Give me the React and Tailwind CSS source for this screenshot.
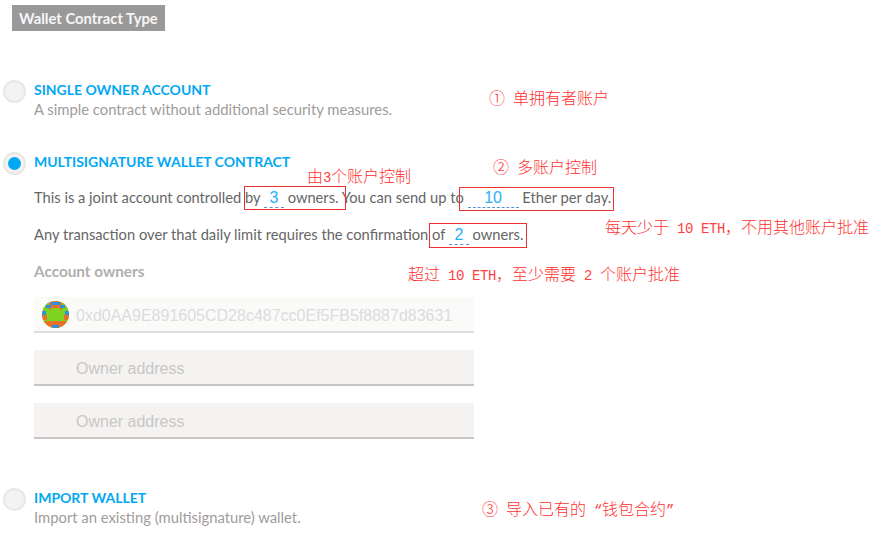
import React from "react";

const sans = { fontFamily: '"Lato", "Noto Sans", sans-serif' };

function Radio({ checked }) {
  return (
    <span className="flex h-[23px] w-[23px] shrink-0 items-center justify-center rounded-full border-2 border-[#e9e8e6] bg-[#f4f3f1]">
      {checked && <span className="h-[13px] w-[13px] rounded-full bg-[#02a8f3]" />}
    </span>
  );
}

function Title({ children }) {
  return <div className="pt-[1px] text-[14px] font-bold leading-[18px] text-[#02a8f3]">{children}</div>;
}

function Desc({ children }) {
  return <div className="pb-[2px] text-[14.8px] leading-[20px] text-[#a09c9b]">{children}</div>;
}

function Num({ w, children }) {
  return (
    <span className={`inline-block border-b border-dashed border-[#5a8fd0] text-center font-['Liberation_Sans',sans-serif] text-[16px] leading-[19px] text-[#29b0f5] ${w}`}>
      {children}
    </span>
  );
}

function Owner({ faded, children, placeholder }) {
  return (
    <div className={`flex h-[36px] w-[440px] items-center border-b-2 pl-[8px] pt-[4px] font-['Liberation_Sans',sans-serif] text-[16px] ${faded ? "border-[#dddcda] bg-[#fafaf9] text-[#dcdcdc]" : "border-[#c9c5c4] bg-[#f4f3f2] text-[#c9c7c5]"}`}>
      <span className="w-[34px] shrink-0">{children}</span>
      <span>{placeholder}</span>
    </div>
  );
}

function Identicon() {
  const o = "#e8702a", b = "#2f8fd8", g = "#7ed321";
  return (
    <svg width="27" height="27" viewBox="0 0 27 27" className="-mt-[3px] block">
      <defs>
        <clipPath id="c"><circle cx="13.5" cy="13.5" r="13.5" /></clipPath>
      </defs>
      <g clipPath="url(#c)">
        <rect width="27" height="27" fill={g} />
        <rect width="27" height="9" fill={o} />
        <rect x="0" y="0" width="7" height="9" fill={g} />
        <rect x="20" y="0" width="7" height="9" fill={g} />
        <rect x="9" y="1" width="9" height="3" fill={b} />
        <rect x="4" y="4" width="5" height="3" fill={b} />
        <rect x="18" y="4" width="5" height="3" fill={b} />
        <rect x="9" y="7" width="9" height="2" fill={g} />
        <rect x="0" y="10" width="4" height="4" fill={b} />
        <rect x="23" y="10" width="4" height="4" fill={b} />
        <rect x="0" y="14" width="5" height="5" fill={o} />
        <rect x="22" y="14" width="5" height="5" fill={o} />
        <rect x="0" y="20" width="27" height="7" fill={o} />
        <rect x="10" y="24" width="7" height="3" fill={b} />
      </g>
    </svg>
  );
}

function L({ children }) {
  return <span className="whitespace-pre font-['Liberation_Mono',monospace] text-[14px] tracking-[-0.4px] text-[#ff4040]">{children}</span>;
}

function Note({ className, children }) {
  return (
    <span className={`absolute whitespace-pre font-['Noto_Sans_CJK_SC',sans-serif] text-[16px] font-light leading-[20px] text-[#ff3030] ${className}`}>
      {children}
    </span>
  );
}

function Box({ className }) {
  return <span className={`absolute border border-[#f03030] ${className}`} />;
}

export default function App() {
  return (
    <div className="relative h-[538px] w-[896px] overflow-hidden bg-white" style={sans}>
      <div className="pl-[12px] pt-[5px]">
        <div className="inline-block h-[26px] bg-[#999999] px-[7px] text-[14.8px] font-bold leading-[26px] text-[#f6f6f6]">
          Wallet Contract Type
        </div>
      </div>

      <div className="mt-[49px] flex gap-[8px] pl-[3px]">
        <Radio />
        <div>
          <Title>SINGLE OWNER ACCOUNT</Title>
          <Desc>A simple contract without additional security measures.</Desc>
        </div>
      </div>

      <div className="mt-[31px] flex gap-[8px] pl-[3px]">
        <Radio checked />
        <div>
          <Title>MULTISIGNATURE WALLET CONTRACT</Title>
          <p className="mt-[14px] text-[14.7px] leading-[24px] text-[#666666]">
            This is a joint account controlled by <Num w="w-[20px]">3</Num> owners. You can send up to <Num w="w-[51px]">10</Num> Ether per day.
          </p>
          <p className="mt-[13px] text-[14.7px] leading-[24px] text-[#666666]">
            Any transaction over that daily limit requires the confirmation of <Num w="w-[20px]">2</Num> owners.
          </p>
          <div className="mt-[15px] text-[15.3px] font-bold leading-[20px] text-[#b2aeac]">Account owners</div>
          <div className="mt-[16px] flex flex-col gap-[17px]">
            <Owner faded placeholder="0xd0AA9E891605CD28c487cc0Ef5FB5f8887d83631"><Identicon /></Owner>
            <Owner placeholder="Owner address" />
            <Owner placeholder="Owner address" />
          </div>
        </div>
      </div>

      <div className="mt-[49px] flex gap-[8px] pl-[3px]">
        <Radio />
        <div>
          <Title>IMPORT WALLET</Title>
          <Desc>Import an existing (multisignature) wallet.</Desc>
        </div>
      </div>

      <Box className="left-[244px] top-[186px] h-[24px] w-[102px]" />
      <Box className="left-[459px] top-[187px] h-[24px] w-[155px]" />
      <Box className="left-[429px] top-[223px] h-[25px] w-[98px]" />

      <Note className="left-[489px] top-[87px]">①<L> </L>单拥有者账户</Note>
      <Note className="left-[493px] top-[156px]">②<L> </L>多账户控制</Note>
      <Note className="left-[307px] top-[165px]">由<L>3</L>个账户控制</Note>
      <Note className="left-[605px] top-[216px]">每天少于<L> 10 ETH</L>，不用其他账户批准</Note>
      <Note className="left-[408px] top-[263px]">超过<L> 10 ETH</L>，至少需要<L> 2 </L>个账户批准</Note>
      <Note className="left-[482px] top-[498px]">③<L> </L>导入已有的<L> “</L>钱包合约<L>”</L></Note>
    </div>
  );
}
